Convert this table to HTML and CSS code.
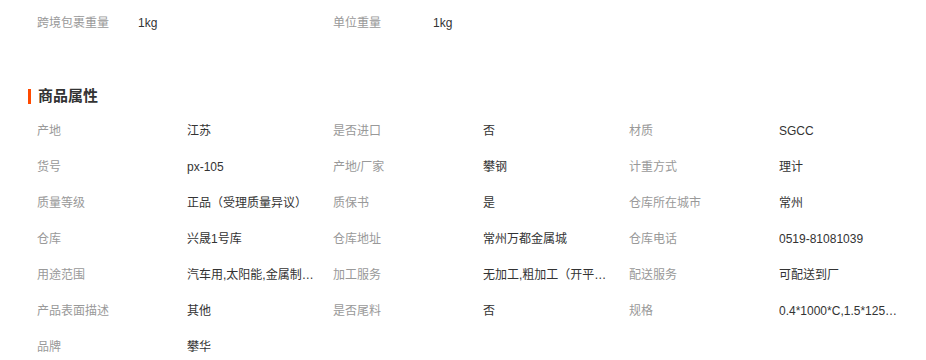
FILE: index.html
```html
<!DOCTYPE html>
<html lang="zh-CN">
<head>
<meta charset="utf-8">
<title>商品属性</title>
<link rel="stylesheet" href="styles.css">
</head>
<body>
<div class="page">
  <div class="pack-row">
    <span class="label">跨境包裹重量</span><span class="value">1kg</span>
    <span class="label">单位重量</span><span class="value">1kg</span>
  </div>

  <h2 class="section-title">商品属性</h2>

  <div class="attr-grid">
    <span class="label">产地</span><span class="value">江苏</span>
    <span class="label">是否进口</span><span class="value">否</span>
    <span class="label">材质</span><span class="value">SGCC</span>

    <span class="label">货号</span><span class="value">px-105</span>
    <span class="label">产地/厂家</span><span class="value">攀钢</span>
    <span class="label">计重方式</span><span class="value">理计</span>

    <span class="label">质量等级</span><span class="value">正品（受理质量异议）</span>
    <span class="label">质保书</span><span class="value">是</span>
    <span class="label">仓库所在城市</span><span class="value">常州</span>

    <span class="label">仓库</span><span class="value">兴晟1号库</span>
    <span class="label">仓库地址</span><span class="value">常州万都金属城</span>
    <span class="label">仓库电话</span><span class="value">0519-81081039</span>

    <span class="label">用途范围</span><span class="value" title="汽车用,太阳能,金属制品,家电,建筑">汽车用,太阳能,金属制品,家电,建筑</span>
    <span class="label">加工服务</span><span class="value" title="无加工,粗加工（开平、分条）">无加工,粗加工（开平、分条）</span>
    <span class="label">配送服务</span><span class="value">可配送到厂</span>

    <span class="label">产品表面描述</span><span class="value">其他</span>
    <span class="label">是否尾料</span><span class="value">否</span>
    <span class="label">规格</span><span class="value" title="0.4*1000*C,1.5*125MM*C">0.4*1000*C,1.5*125MM*C</span>

    <span class="label">品牌</span><span class="value">攀华</span>
  </div>
</div>
</body>
</html>
```

FILE: styles.css
```css
* {
  box-sizing: border-box;
}

html, body {
  margin: 0;
  padding: 0;
  background: #fff;
}

body {
  font-family: "Liberation Sans", "Noto Sans CJK SC", sans-serif;
  font-size: 12px;
  color: #333;
}

.page {
  padding: 15px 0 0 28px;
}

.label {
  color: #999;
  white-space: nowrap;
}

.value {
  color: #333;
  white-space: nowrap;
  overflow: hidden;
  text-overflow: ellipsis;
  max-width: 128px;
}

.pack-row {
  display: grid;
  grid-template-columns: 101px 195px 100px 196px;
  padding-left: 9px;
  line-height: 16px;
}

.section-title {
  margin: 55px 0 7px 0;
  font-size: 15px;
  line-height: 20px;
  font-weight: bold;
  color: #333;
  display: flex;
  align-items: center;
  gap: 7px;
}

.section-title::before {
  content: "";
  display: block;
  width: 3px;
  height: 15px;
  background: #ff4a00;
}

.attr-grid {
  display: grid;
  grid-template-columns: 150px 146px 150px 146px 150px 146px;
  grid-auto-rows: 36px;
  align-items: center;
  padding-left: 9px;
  line-height: 16px;
}
```
